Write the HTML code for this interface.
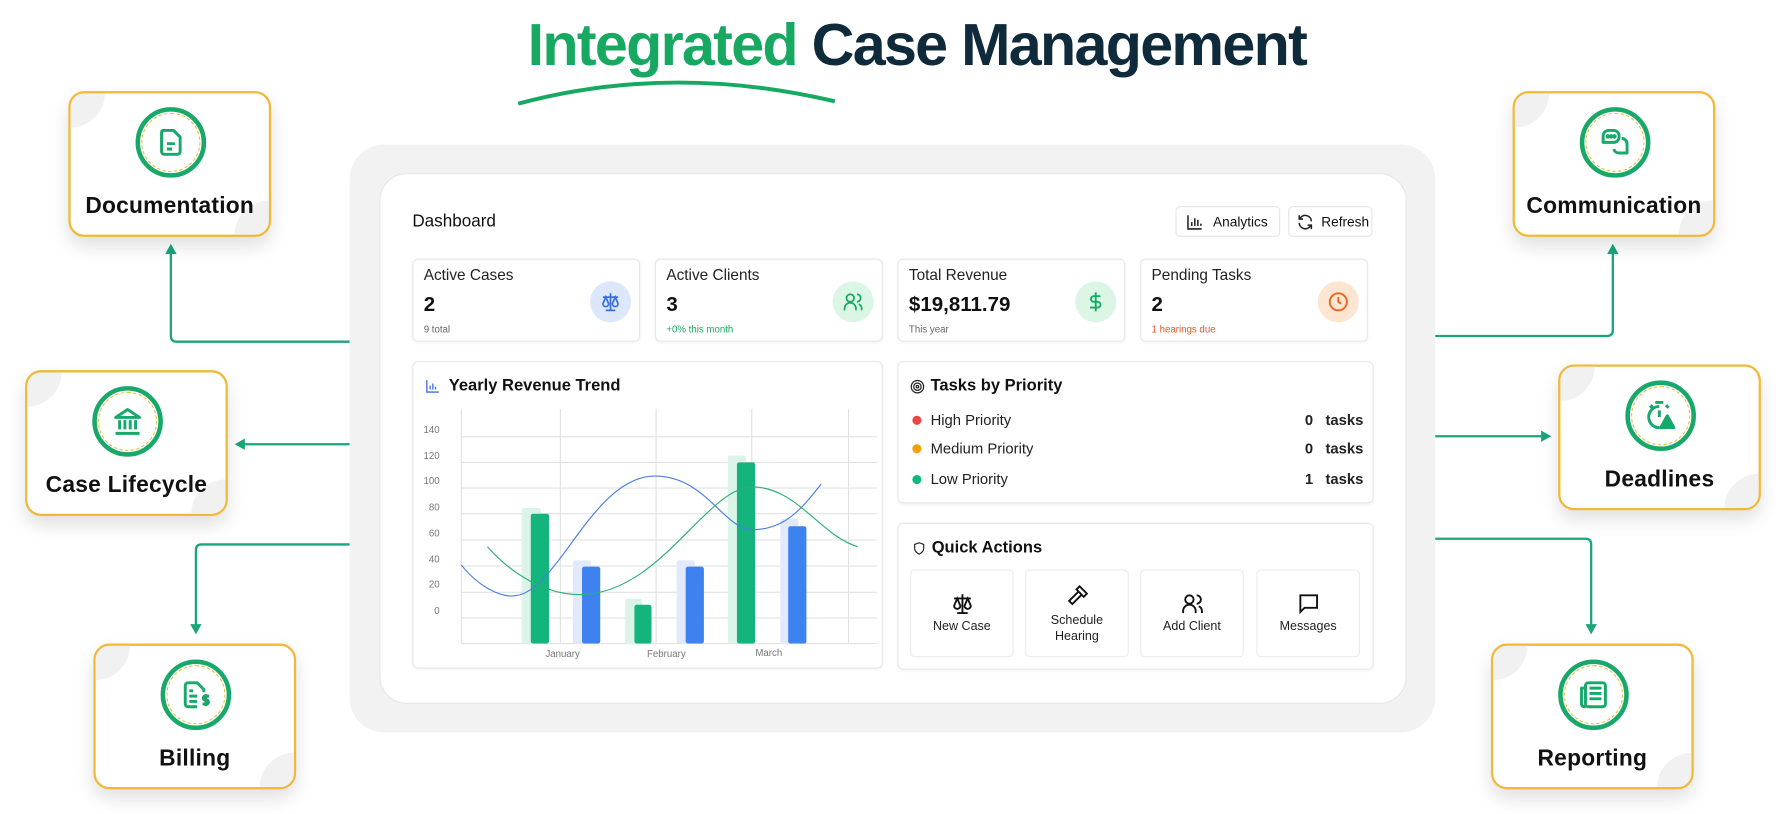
<!DOCTYPE html>
<html><head><meta charset="utf-8"><style>
*{box-sizing:border-box;margin:0;padding:0}
html,body{width:1786px;height:814px;overflow:hidden;background:#fff;font-family:"Liberation Sans",sans-serif;color:#111}
#w{position:absolute;left:0;top:0;width:1568px;height:715px;transform:scale(1.139);transform-origin:0 0}
.abs{position:absolute}
.title{position:absolute;left:0;width:1610px;text-align:center;top:10px;font-size:52px;font-weight:700;letter-spacing:-1.5px;color:#0f2a3a}
.title span{color:#17a862}
.box{position:absolute;width:178px;height:128px;border:2px solid #f0b93a;border-radius:14px;background:#fff;box-shadow:0 8px 16px rgba(0,0,0,.12);overflow:hidden}
.box:before{content:"";position:absolute;left:-30px;top:-30px;width:60px;height:60px;border-radius:50%;background:#f1f1f1}
.box:after{content:"";position:absolute;right:-30px;bottom:-30px;width:60px;height:60px;border-radius:50%;background:#f1f1f1}
.box .ic{position:absolute;left:57px;top:12px;width:62px;height:62px;border-radius:50%;border:4px solid #17a86a;background:#fff;z-index:1}
.box .ic i{position:absolute;inset:1px;border-radius:50%;border:1.3px dashed #e3c43a}
.box .ic svg{position:absolute;left:13px;top:13px;width:28px;height:28px}
.box .lb{position:absolute;left:0;right:0;top:88px;text-align:center;font-size:20px;font-weight:700;color:#111;z-index:1;letter-spacing:.2px}
.panel{position:absolute;left:307px;top:127px;width:953px;height:516px;background:#f2f2f2;border-radius:30px}
.inner{position:absolute;left:333px;top:152px;width:902px;height:466px;background:#fff;border-radius:24px;border:1.5px solid #e6e6e6}
.card{position:absolute;background:#fff;border:1px solid #e8e8e8;border-radius:5px;box-shadow:0 1px 3px rgba(0,0,0,.05)}
.stat .t{position:absolute;left:9px;top:6px;font-size:13.5px;color:#222}
.stat .v{position:absolute;left:9px;top:29px;font-size:18px;font-weight:700}
.stat .s{position:absolute;left:9px;top:56px;font-size:8.5px;color:#666}
.stat .c{position:absolute;right:7px;top:19px;width:36px;height:36px;border-radius:50%}
.stat .c svg{position:absolute;left:8px;top:8px;width:20px;height:20px}
.btn{position:absolute;top:181px;height:27px;border:1px solid #e6e6e6;border-radius:4px;font-size:12px;display:flex;align-items:center;gap:8px;padding-left:8px;background:#fff}
.row{position:absolute;left:12px;right:8px;font-size:13px;color:#222;display:flex;align-items:center}
.row b{width:8px;height:8px;border-radius:50%;margin-right:8px;display:inline-block}
.row .n{margin-left:auto;font-weight:700;font-size:13px}
.tile{position:absolute;top:40px;width:91px;height:77px;border:1px solid #ececec;border-radius:4px;text-align:center;font-size:11px;color:#222}
.tile svg{position:absolute;left:34px;width:22px;height:22px}
</style></head><body><div id="w">

<div class="title"><span>Integrated</span> Case Management</div>
<svg class="abs" style="left:0;top:0" width="1568" height="715">
<path d="M455 91 Q590 55 733 89" fill="none" stroke="#17a862" stroke-width="3.5"/>
<g fill="none" stroke="#1aa57a" stroke-width="2">
<path d="M307 300 H155 Q150 300 150 295 V222"/>
<path d="M307 390 H214"/>
<path d="M307 478 H177 Q172 478 172 483 V550"/>
<path d="M1260 295 H1411 Q1416 295 1416 290 V222"/>
<path d="M1260 383 H1354"/>
<path d="M1260 473 H1392 Q1397 473 1397 478 V550"/>
</g>
<g fill="#1aa57a">
<path d="M150 214 L145 223 H155Z"/><path d="M206 390 L215 385 V395Z"/><path d="M172 557 L167 548 H177Z"/>
<path d="M1416 214 L1411 223 H1421Z"/><path d="M1362 383 L1353 378 V388Z"/><path d="M1397 557 L1392 548 H1402Z"/>
</g>
</svg>

<div class="box" style="left:60px;top:80px"><div class="ic"><i></i><svg viewBox="0 0 24 24" fill="none" stroke="#17a86a" stroke-width="2.2" stroke-linejoin="round"><path d="M6 3h8l5 5v11a2 2 0 0 1-2 2H7a2 2 0 0 1-2-2V5a2 2 0 0 1 1-2z"/><path d="M9 13h6M9 17h4"/></svg></div><div class="lb">Documentation</div></div>
<div class="box" style="left:22px;top:325px"><div class="ic"><i></i><svg viewBox="0 0 24 24" fill="none" stroke="#17a86a" stroke-width="2.2" stroke-linejoin="round"><path d="M3 9 L12 3 L21 9Z"/><path d="M6 11v7M10 11v7M14 11v7M18 11v7M3 21h18"/></svg></div><div class="lb">Case Lifecycle</div></div>
<div class="box" style="left:82px;top:565px"><div class="ic"><i></i><svg viewBox="0 0 24 24" fill="none" stroke="#17a86a" stroke-width="2.2" stroke-linejoin="round"><path d="M13 21H6a2 2 0 0 1-2-2V5a2 2 0 0 1 2-2h7l5 5v2"/><path d="M7 9h3M7 13h6M7 17h6"/><path d="M22 13h-3a1.5 1.5 0 0 0 0 3h1a1.5 1.5 0 0 1 0 3h-3M19.5 11.5v9"/></svg></div><div class="lb">Billing</div></div>
<div class="box" style="left:1328px;top:80px"><div class="ic"><i></i><svg viewBox="0 0 24 24" fill="none" stroke="#17a86a" stroke-width="2.2" stroke-linejoin="round"><path d="M3 12V7a4 4 0 0 1 4-4h4a4 4 0 0 1 4 4v1a4 4 0 0 1-4 4H3z"/><path d="M17 9a4 4 0 0 1 4 4v7h-6a4 4 0 0 1-4-3"/><circle cx="6.5" cy="7.5" r=".6" fill="#17a86a"/><circle cx="9" cy="7.5" r=".6" fill="#17a86a"/><circle cx="11.5" cy="7.5" r=".6" fill="#17a86a"/></svg></div><div class="lb">Communication</div></div>
<div class="box" style="left:1368px;top:320px"><div class="ic"><i></i><svg viewBox="0 0 24 24" fill="none" stroke="#17a86a" stroke-width="2.2" stroke-linejoin="round"><path d="M11 5a8 8 0 1 0 0 16"/><path d="M11 8v5M8 2h6M4 6l2-2M18 6l-2-2"/><path d="M17 12l5 9h-10z" fill="#17a86a"/></svg></div><div class="lb">Deadlines</div></div>
<div class="box" style="left:1309px;top:565px"><div class="ic"><i></i><svg viewBox="0 0 24 24" fill="none" stroke="#17a86a" stroke-width="2.2" stroke-linejoin="round"><rect x="6" y="3" width="15" height="18" rx="2"/><path d="M6 7H3v12a2 2 0 0 0 2 2h1M9 7h9M9 11h9M9 15h9"/></svg></div><div class="lb">Reporting</div></div>

<div class="panel"></div>
<div class="inner"></div>
<div class="abs" style="left:362px;top:186px;font-size:15px;color:#111">Dashboard</div>
<div class="btn" style="left:1032px;width:92px"><svg width="16" height="16" viewBox="0 0 24 24" fill="none" stroke="#222" stroke-width="2"><path d="M3 3v18h18M8 17v-5M12 17V7M16 17v-8M20 17v-3"/></svg>Analytics</div>
<div class="btn" style="left:1131px;width:74px;gap:6px;padding-left:6px"><svg width="16" height="16" viewBox="0 0 24 24" fill="none" stroke="#222" stroke-width="2"><path d="M20 11a8 8 0 0 0-14-5L4 8M4 3v5h5M4 13a8 8 0 0 0 14 5l2-2M20 21v-5h-5"/></svg>Refresh</div>

<div class="card stat" style="left:362px;top:227px;width:200px;height:73px"><div class="t">Active Cases</div><div class="v">2</div><div class="s">9 total</div><div class="c" style="background:#dce7fb"><svg viewBox="0 0 24 24" fill="none" stroke="#3b6fe0" stroke-width="1.8"><path d="M12 3v18M7 21h10M4 7h16M7 7l-3 7a3 3 0 0 0 6 0zM17 7l-3 7a3 3 0 0 0 6 0z"/></svg></div></div>
<div class="card stat" style="left:575px;top:227px;width:200px;height:73px"><div class="t">Active Clients</div><div class="v">3</div><div class="s" style="color:#17a862">+0% this month</div><div class="c" style="background:#dcf6e6"><svg viewBox="0 0 24 24" fill="none" stroke="#17a862" stroke-width="1.8"><circle cx="9" cy="8" r="4"/><path d="M3 21v-2a5 5 0 0 1 12 0v2M16 4a4 4 0 0 1 0 8M21 21v-2a5 5 0 0 0-3-4.5"/></svg></div></div>
<div class="card stat" style="left:788px;top:227px;width:200px;height:73px"><div class="t">Total Revenue</div><div class="v">$19,811.79</div><div class="s">This year</div><div class="c" style="background:#dcf6e6"><svg viewBox="0 0 24 24" fill="none" stroke="#17a862" stroke-width="2"><path d="M12 2v20M17 6H10a3 3 0 0 0 0 6h4a3 3 0 0 1 0 6H6"/></svg></div></div>
<div class="card stat" style="left:1001px;top:227px;width:200px;height:73px"><div class="t">Pending Tasks</div><div class="v">2</div><div class="s" style="color:#e05a1c">1 hearings due</div><div class="c" style="background:#fde5d2"><svg viewBox="0 0 24 24" fill="none" stroke="#e8651f" stroke-width="2"><circle cx="12" cy="12" r="9"/><path d="M12 7v5l3 2"/></svg></div></div>

<div class="card" style="left:362px;top:317px;width:413px;height:270px">
<div class="abs" style="left:10px;top:13px;font-size:14.5px;font-weight:700;display:flex;align-items:center;gap:7px"><svg width="14" height="14" viewBox="0 0 24 24" fill="none" stroke="#3b6fe0" stroke-width="2"><path d="M3 3v18h18M8 17v-6M12 17V8M16 17v-4"/></svg>Yearly Revenue Trend</div>
</div>
<svg class="abs" style="left:0;top:0" width="1568" height="715" font-family="Liberation Sans" font-size="8.5" fill="#777">
<g stroke="#e2e2e2" stroke-width="1">
<path d="M405 383.5H770M405 406H770M405 428.5H770M405 451H770M405 474H770M405 497H770M405 520H770M405 542.5H770"/>
<path d="M405 359V565M492 359V565M576 359V565M660 359V565M745 359V565"/>
<path d="M405 565H770"/>
</g>
<text x="386" y="380" text-anchor="end">140</text><text x="386" y="403" text-anchor="end">120</text><text x="386" y="425" text-anchor="end">100</text><text x="386" y="448" text-anchor="end">80</text><text x="386" y="471" text-anchor="end">60</text><text x="386" y="494" text-anchor="end">40</text><text x="386" y="516" text-anchor="end">20</text><text x="386" y="539" text-anchor="end">0</text>
<text x="494" y="577" text-anchor="middle">January</text><text x="585" y="577" text-anchor="middle">February</text><text x="675" y="576" text-anchor="middle">March</text>
<g fill="#dcf3e7"><rect x="458" y="446" width="17" height="119" rx="2"/><rect x="549" y="525.6" width="15" height="40" rx="2"/><rect x="639" y="400" width="16" height="165" rx="2"/></g>
<g fill="#e1e9fb"><rect x="503" y="492" width="16" height="73" rx="2"/><rect x="594" y="492" width="16" height="73" rx="2"/><rect x="685" y="455.7" width="16" height="110" rx="2"/></g>
<g fill="#13b57c"><rect x="466" y="451" width="16" height="114" rx="2"/><rect x="557" y="531" width="15" height="34" rx="2"/><rect x="647" y="406" width="16" height="159" rx="2"/></g>
<g fill="#3d82ef"><rect x="511" y="497.5" width="16" height="67.5" rx="2"/><rect x="602" y="497.5" width="16" height="67.5" rx="2"/><rect x="692" y="462" width="16" height="103" rx="2"/></g>
<path d="M405 496 C420 515 440 525 452 523 C490 520 520 418 575 418 C620 418 635 465 661 465 C690 465 705 445 721 425" fill="none" stroke="#4a7fe0" stroke-width="1"/>
<path d="M428 480 C450 505 480 522 509 522 C580 522 620 427 661 427.5 C700 428 720 470 753 480" fill="none" stroke="#2aaf78" stroke-width="1"/>
</svg>

<div class="card" style="left:788px;top:317px;width:418px;height:125px">
<div class="abs" style="left:10px;top:13px;font-size:14.5px;font-weight:700;display:flex;align-items:center;gap:5px"><svg width="13" height="13" viewBox="0 0 24 24" fill="none" stroke="#222" stroke-width="2"><circle cx="12" cy="12" r="10"/><circle cx="12" cy="12" r="6"/><circle cx="12" cy="12" r="2"/></svg>Tasks by Priority</div>
<div class="row" style="top:43px"><b style="background:#ef4444"></b>High Priority<span class="n">0&nbsp;&nbsp; tasks</span></div>
<div class="row" style="top:68px"><b style="background:#f59e0b"></b>Medium Priority<span class="n">0&nbsp;&nbsp; tasks</span></div>
<div class="row" style="top:95px"><b style="background:#10b981"></b>Low Priority<span class="n">1&nbsp;&nbsp; tasks</span></div>
</div>

<div class="card" style="left:788px;top:459px;width:418px;height:129px">
<div class="abs" style="left:12px;top:13px;font-size:14.5px;font-weight:700;display:flex;align-items:center;gap:5px"><svg width="12" height="13" viewBox="0 0 24 24" fill="none" stroke="#222" stroke-width="2"><path d="M12 2l8 3v7c0 5-4 8-8 10-4-2-8-5-8-10V5z"/></svg>Quick Actions</div>
<div class="tile" style="left:10px"><svg style="top:18px" viewBox="0 0 24 24" fill="none" stroke="#111" stroke-width="1.8"><path d="M12 3v18M7 21h10M4 7h16M7 7l-3 7a3 3 0 0 0 6 0zM17 7l-3 7a3 3 0 0 0 6 0z"/></svg><div style="position:absolute;top:43px;width:100%">New Case</div></div>
<div class="tile" style="left:111px"><svg style="top:11px" viewBox="0 0 24 24" fill="none" stroke="#111" stroke-width="1.8"><path d="M14 3l7 7-3 3-7-7zM12.5 8.5L4 17l3 3 8.5-8.5"/></svg><div style="position:absolute;top:37px;width:100%;line-height:14px">Schedule<br>Hearing</div></div>
<div class="tile" style="left:212px"><svg style="top:18px" viewBox="0 0 24 24" fill="none" stroke="#111" stroke-width="1.8"><circle cx="9" cy="8" r="4"/><path d="M3 21v-2a5 5 0 0 1 12 0v2M16 4a4 4 0 0 1 0 8M21 21v-2a5 5 0 0 0-3-4.5"/></svg><div style="position:absolute;top:43px;width:100%">Add Client</div></div>
<div class="tile" style="left:314px"><svg style="top:18px" viewBox="0 0 24 24" fill="none" stroke="#111" stroke-width="1.8"><path d="M4 4h16v12H8l-4 4z"/></svg><div style="position:absolute;top:43px;width:100%">Messages</div></div>
</div>

</div></body></html>
